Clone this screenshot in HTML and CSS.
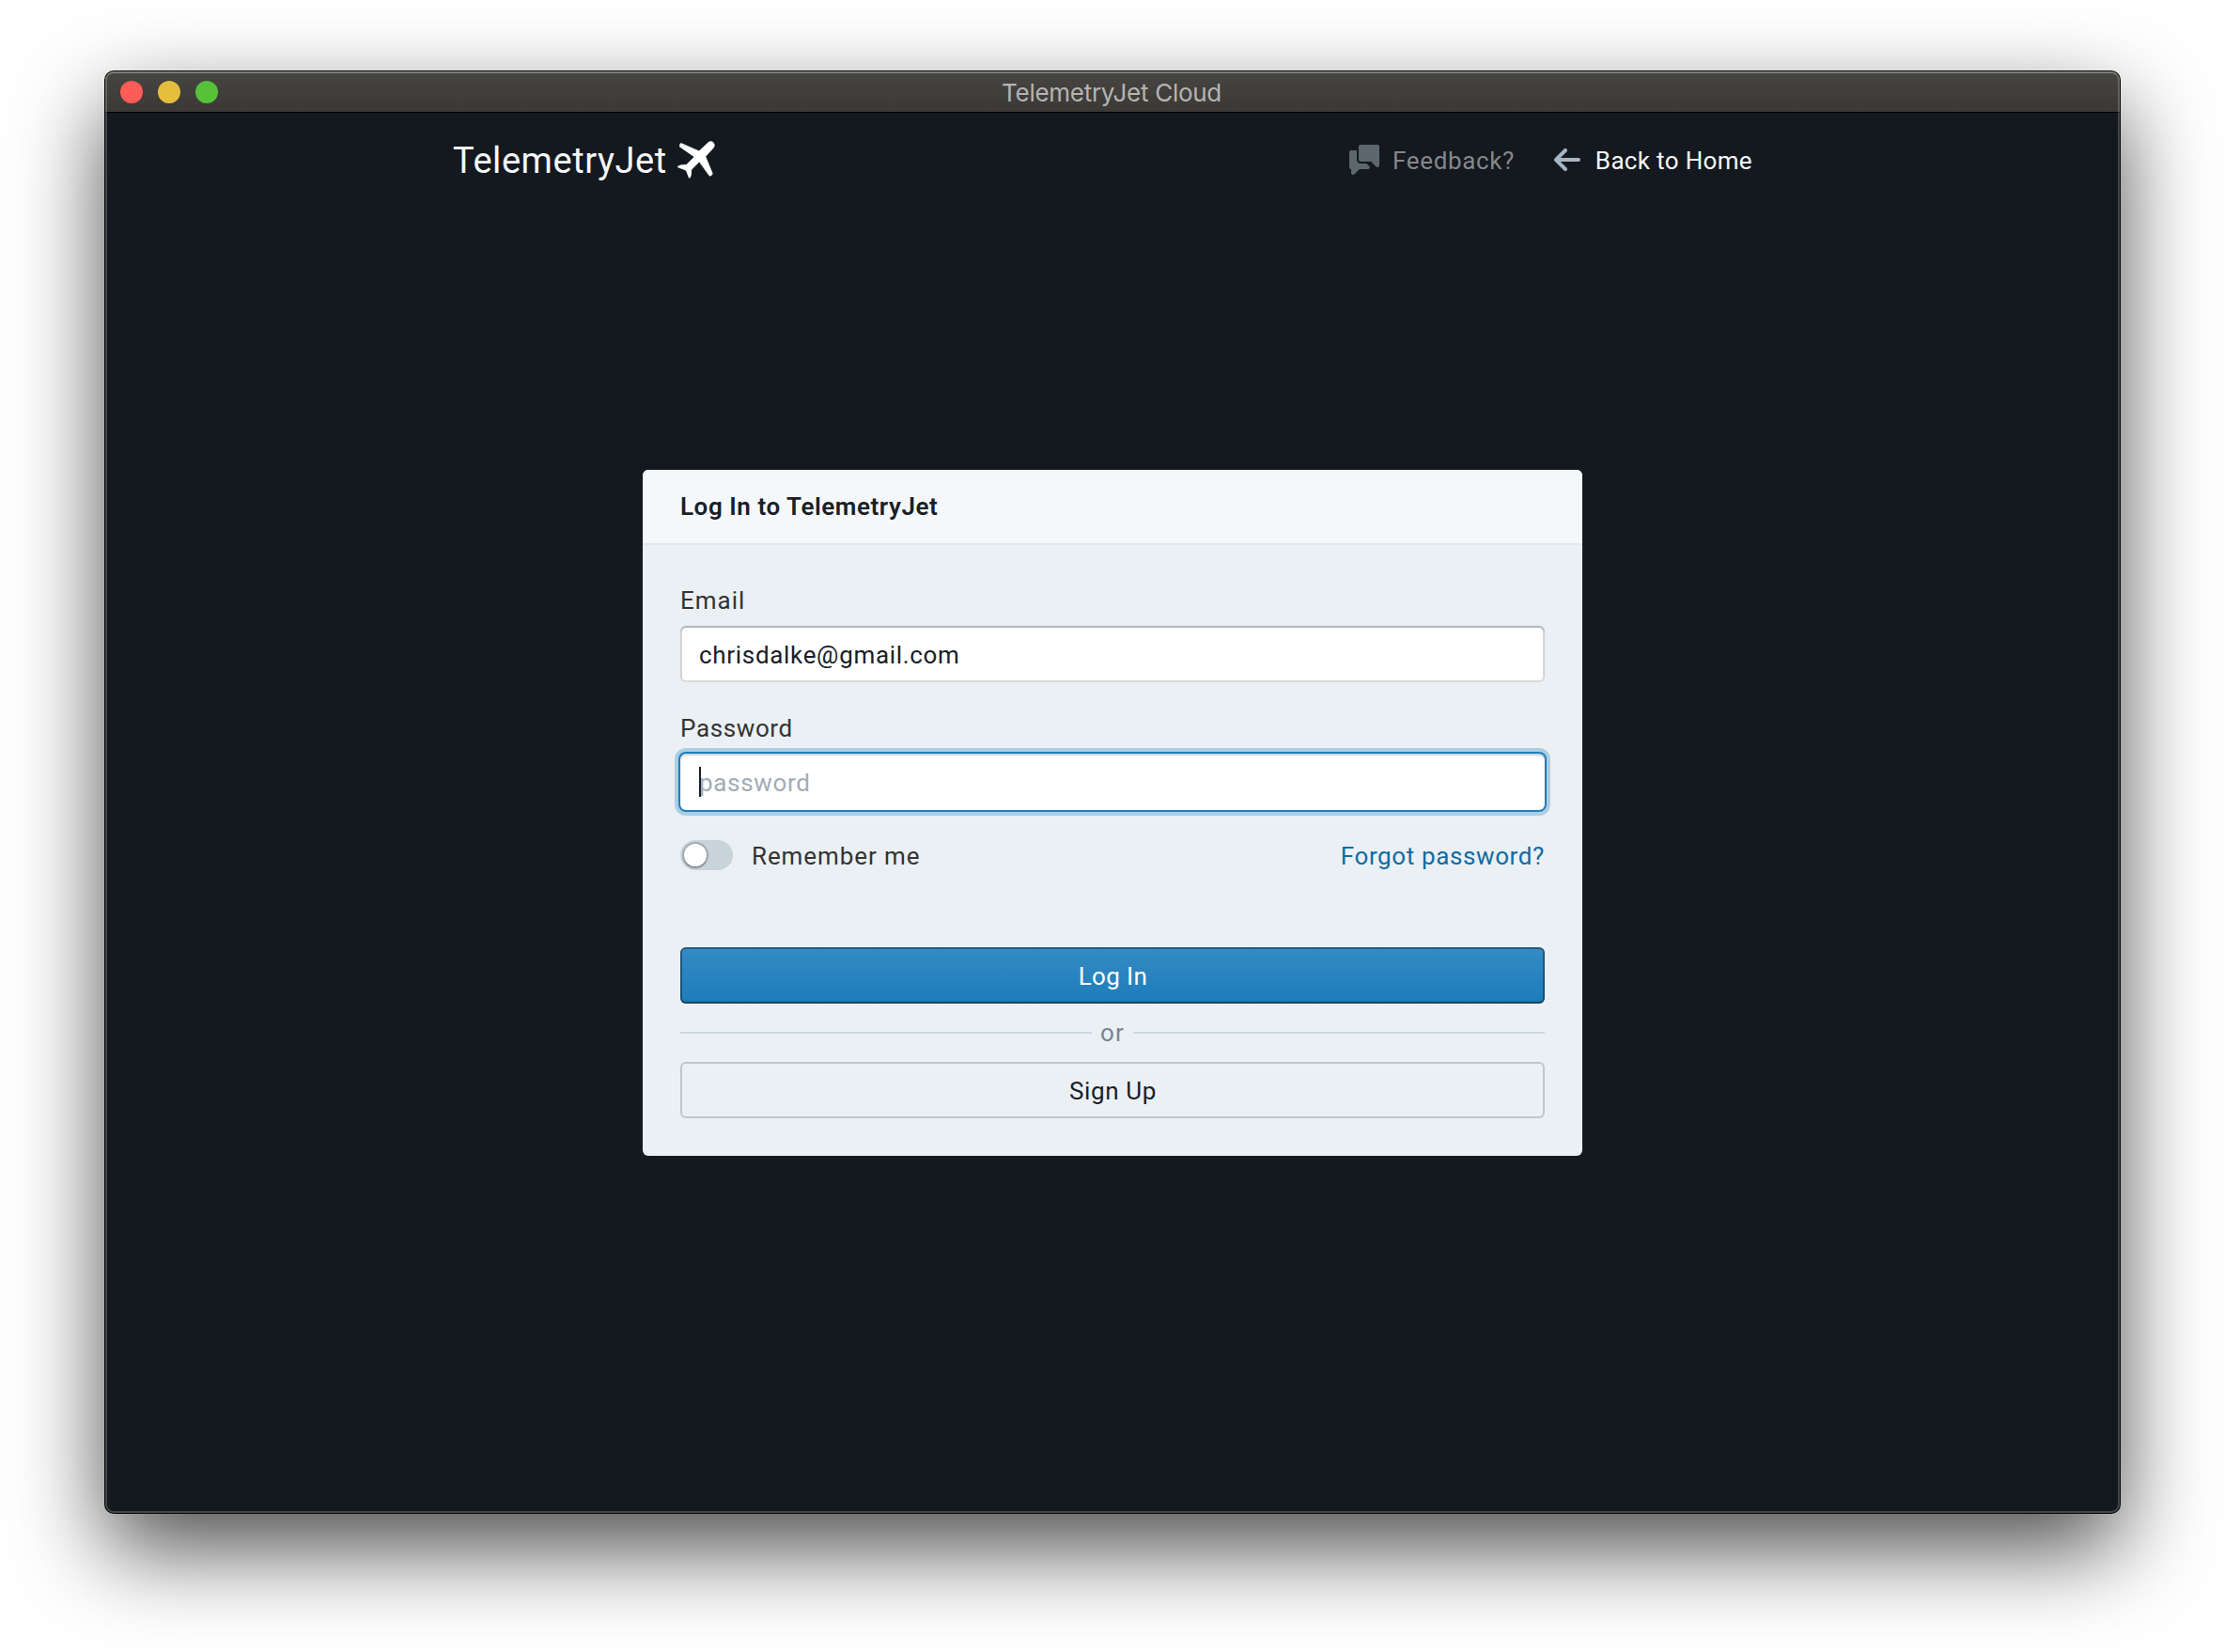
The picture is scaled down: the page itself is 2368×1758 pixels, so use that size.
FILE: index.html
```
<!DOCTYPE html>
<html lang="en">
<head>
<meta charset="utf-8">
<title>TelemetryJet Cloud</title>
<link rel="stylesheet" href="styles.css">
</head>
<body>
<div class="window">
  <div class="titlebar">
    <div class="lights"><i class="light close"></i><i class="light minimize"></i><i class="light zoom"></i></div>
    <span class="window-title">TelemetryJet Cloud</span>
  </div>
  <header class="navbar">
    <a class="brand"><span>TelemetryJet</span>
      <svg class="plane" width="40" height="40" viewBox="0 0 40 40"><path fill="#fff" d="M4.2 2.3L23 10.6L32.8 1.2C36.2-1.6 41.6 3 38.9 6.9L30.2 16.4L37.6 34.6C37.9 35.5 35.1 38.3 34 37.4L23.2 22.6L15.2 30.4L14.9 35C14.9 36.8 14 38.7 13.2 39.6C12.2 40.3 11.7 38.5 11.3 37.5L9.3 32.2L8.3 31.2L2.5 29.1C1.4 28.7-.4 28.2.2 27.1C1.3 26 3.2 25.2 5 25.2L9.5 24.9L17.6 17.1L2.5 6.4C1.4 5.5 2.6 1.7 4.2 2.3Z"/></svg>
    </a>
    <nav class="links">
      <a class="link feedback">
        <svg width="32" height="32" viewBox="0 0 16 16"><path fill="#5c6770" d="M15 0H6c-.55 0-1 .45-1 1v7c0 .55.45 1 1 1h5.59l2.7 2.71c.19.18.44.29.71.29.55 0 1-.45 1-1V1c0-.55-.45-1-1-1zM6 10c-1.1 0-2-.9-2-2V3H1c-.55 0-1 .45-1 1v8c0 .55.45 1 1 1v2c0 .55.45 1 1 1 .28 0 .53-.11.71-.29L5.41 13H10c.55 0 1-.45 1-1v-.17L9.17 10H6z"/></svg>
        <span>Feedback?</span>
      </a>
      <a class="link home">
        <svg width="32" height="32" viewBox="0 0 16 16"><path fill="#a7b6c2" d="M13.99 6.99H4.41L7.7 3.7a1.003 1.003 0 00-1.42-1.42l-5 5a1.014 1.014 0 000 1.42l5 5a1.003 1.003 0 001.42-1.42L4.41 8.99H14c.55 0 1-.45 1-1s-.46-1-1.01-1z"/></svg>
        <span>Back to Home</span>
      </a>
    </nav>
  </header>
  <main class="content">
    <section class="card">
      <h1 class="card-title">Log In to TelemetryJet</h1>
      <form class="card-body">
        <label class="label email-label" for="email">Email</label>
        <input class="input" id="email" type="text" value="chrisdalke@gmail.com">
        <label class="label" for="password">Password</label>
        <div class="focus-field">
          <input class="input focused" id="password" type="text" placeholder="password">
          <i class="caret"></i>
        </div>
        <div class="options">
          <span class="switch"><i class="knob"></i></span>
          <span class="remember">Remember me</span>
          <a class="forgot">Forgot password?</a>
        </div>
        <button class="button primary" type="button">Log In</button>
        <div class="divider"><span>or</span></div>
        <button class="button" type="button">Sign Up</button>
      </form>
    </section>
  </main>
</div>
</body>
</html>
```
FILE: styles.css
```
* { box-sizing: border-box; }

body {
  min-height: 1758px;
  margin: 0;
  padding: 76px 112px;
  background: #fff;
  font: 26px/36px Roboto, sans-serif;
  letter-spacing: .62px;
  color: #333;
}

.window {
  position: relative;
  display: flex;
  flex-direction: column;
  height: 1534px;
  border-radius: 9px;
  background: #14181f;
  box-shadow: 0 0 0 1px #050607, 0 38px 96px rgba(0, 0, 0, .7);
}

/* light rim just inside the window edge */
.window::after {
  content: "";
  position: absolute;
  inset: 0;
  border: 2px solid rgba(255, 255, 255, .2);
  border-top-color: rgba(255, 255, 255, .3);
  border-radius: 9px;
  pointer-events: none;
}

.titlebar {
  display: grid;
  grid-template-columns: 1fr auto 1fr;
  align-items: center;
  height: 44px;
  padding: 1px 16px 0;
  border-bottom: 1px solid #000;
  border-radius: 9px 9px 0 0;
  background: linear-gradient(#464542, #3a3936);
}

.lights { display: flex; gap: 16px; }
.light { width: 24px; height: 24px; border-radius: 50%; }
.close { background: #ff5c57; }
.minimize { background: #e6be3e; }
.zoom { background: #58c13a; }

.window-title {
  padding: 1px 2px 0 0;
  font: 26px/40px Inter, sans-serif;
  letter-spacing: -.28px;
  color: #b5b4b2;
}

.navbar {
  display: flex;
  justify-content: space-between;
  align-items: center;
  width: 1400px;
  height: 100px;
  margin: 0 auto;
}

.brand {
  display: flex;
  align-items: center;
  gap: 11px;
  margin-left: -2px;
  font-size: 38px;
  letter-spacing: .56px;
  color: #f5f8fa;
}
.brand span { padding-top: 2px; }

.links { display: flex; gap: 40px; padding-right: 19px; }
.link { display: flex; align-items: center; gap: 14px; }
.link span { padding-top: 2px; }
.feedback { color: #85878b; }
.home { color: #f5f8fa; letter-spacing: .34px; }

.content {
  display: flex;
  justify-content: center;
  padding-top: 280px;
}

.card {
  width: 1000px;
  height: 730px;
  border-radius: 6px;
  background: #ebf0f4;
  overflow: hidden;
}

.card-title {
  height: 80px;
  margin: 0;
  padding: 0 40px;
  border-bottom: 2px solid #e1e8ec;
  background: #f5f8fb;
  font-size: 26px;
  font-weight: 600;
  line-height: 78px;
  letter-spacing: .56px;
  color: #182026;
}

.card-body {
  display: flex;
  flex-direction: column;
  padding: 41px 40px 40px;
}

.label { margin-bottom: 9px; }
.email-label { letter-spacing: 1px; }

.input {
  width: 100%;
  height: 60px;
  margin: 0 0 31px;
  padding: 2px 20px 0;
  border: 0;
  border-radius: 6px;
  outline: 0;
  background: #fff;
  box-shadow: inset 0 0 0 2px rgba(16, 22, 26, .16), inset 0 2px 2px rgba(16, 22, 26, .2);
  font: inherit;
  letter-spacing: .68px;
  color: #182026;
}
.input::placeholder { color: #a0acb6; opacity: 1; }

.focus-field { position: relative; height: 60px; }
.focused {
  display: block;
  box-shadow: 0 0 0 2px #1d7fbe, 0 0 0 6px #aecde1, inset 0 2px 2px rgba(16, 22, 26, .2);
}
.caret {
  position: absolute;
  left: 20px;
  top: 14px;
  width: 2px;
  height: 32px;
  background: #182026;
}

.options {
  display: flex;
  align-items: center;
  height: 32px;
  margin: 32px 0 82px;
}
.switch {
  width: 56px;
  height: 32px;
  padding: 4px;
  border-radius: 16px;
  background: #c9d3da;
}
.knob {
  display: block;
  width: 24px;
  height: 24px;
  border-radius: 50%;
  background: #fff;
  box-shadow: 0 0 0 2px rgba(16, 22, 26, .2), 0 2px 2px rgba(16, 22, 26, .2);
}
.remember { padding: 2px 0 0 20px; letter-spacing: .9px; }
.forgot { margin-left: auto; padding-top: 2px; color: #106ba3; }

.button {
  height: 60px;
  padding: 2px 0 0 1px;
  border: 0;
  border-radius: 6px;
  background: transparent;
  box-shadow: inset 0 0 0 2px #c0c6ca;
  font: inherit;
  letter-spacing: .6px;
  color: #182026;
}
.primary {
  background: linear-gradient(#368bc3, #1c7cbb);
  box-shadow: inset 0 0 0 2px rgba(16, 22, 26, .4), inset 0 -2px 2px rgba(16, 22, 26, .2);
  letter-spacing: .4px;
  color: #fff;
}

.divider {
  display: flex;
  align-items: center;
  gap: 9px;
  height: 62px;
  letter-spacing: 1.2px;
  color: #76858f;
}
.divider::before,
.divider::after {
  content: "";
  flex: 1;
  height: 2px;
  background: #cdd8df;
}
```
